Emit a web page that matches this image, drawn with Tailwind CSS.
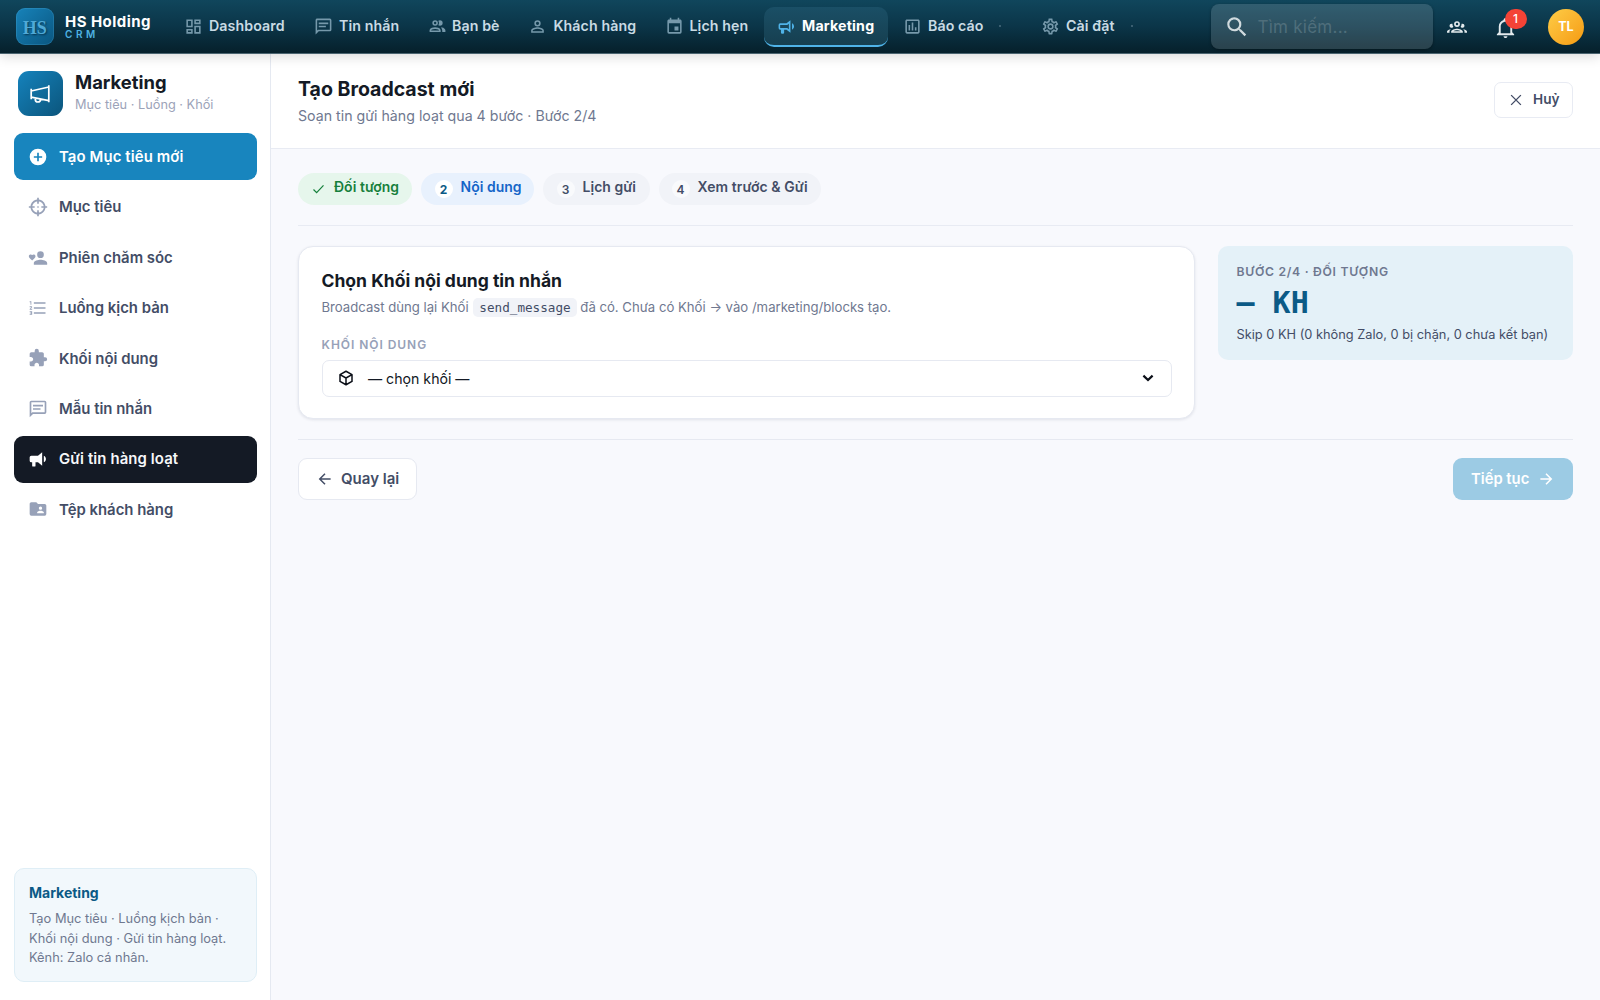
<!DOCTYPE html>
<html lang="vi">
<head>
<meta charset="utf-8">
<title>HS Holding CRM</title>
<script src="https://cdn.jsdelivr.net/npm/@tailwindcss/browser@4"></script>
</head>
<body class="flex h-[1000px] w-[1600px] flex-col overflow-hidden bg-[#f8f9fd] font-['Inter',sans-serif] text-[#141a25]">

<!-- Top bar -->
<header class="relative z-10 flex h-[54px] shrink-0 items-center border-b border-[#4a6470] bg-linear-to-b from-[#10465c] via-[#0b3548] to-[#06202b] shadow-[0_2px_12px_rgba(0,0,0,0.16)]">
  <div class="ml-4 grid size-[37.5px] shrink-0 place-items-center rounded-[9px] bg-linear-to-br from-[#1783ba] to-[#0a5680] pt-[2px] font-['Liberation_Serif',serif] text-[18px] leading-none font-bold text-[#4fa9d6] shadow-[inset_0_0_0_1px_rgba(90,180,225,0.22)] [text-shadow:1px_1px_2px_rgba(0,30,50,0.7)]">HS</div>
  <div class="ml-[11.5px] w-[105.5px] shrink-0">
    <div class="text-[15px] leading-[15px] font-bold tracking-[0.45px] whitespace-nowrap text-white">HS Holding</div>
    <div class="text-[10px] leading-[10px] font-semibold tracking-[3.6px] text-[#4fb3e3]">CRM</div>
  </div>
  <nav class="flex h-full items-center text-[14.2px] font-semibold tracking-[0.1px] whitespace-nowrap text-[#c9dbe4] [&_span]:-mt-px [&_svg]:size-[19px] [&_svg]:shrink-0 [&_svg]:fill-[#7699ab]">
    <a class="flex w-[130px] items-center gap-[6.5px] pl-[13px]"><svg viewBox="0 0 24 24"><path d="M19,5V7H15V5H19M9,5V11H5V5H9M19,13V19H15V13H19M9,17V19H5V17H9M21,3H13V9H21V3M11,3H3V13H11V3M21,11H13V21H21V11M11,15H3V21H11V15Z"/></svg><span>Dashboard</span></a>
    <a class="flex w-[114px] items-center gap-[6.5px] pl-[13px]"><svg viewBox="0 0 24 24"><path d="M20,2A2,2 0 0,1 22,4V16A2,2 0 0,1 20,18H6L2,22V4C2,2.89 2.9,2 4,2H20M4,4V17.17L5.17,16H20V4H4M6,7H18V9H6V7M6,11H15V13H6V11Z"/></svg><span>Tin nhắn</span></a>
    <a class="flex w-[100.5px] items-center gap-[5.5px] pl-[13px]"><svg viewBox="0 0 24 24"><path d="M13.07 10.41A5 5 0 0 0 13.07 4.59A3.39 3.39 0 0 1 15 4A3.5 3.5 0 0 1 15 11A3.39 3.39 0 0 1 13.07 10.41M5.5 7.5A3.5 3.5 0 1 1 9 11A3.5 3.5 0 0 1 5.5 7.5M7.5 7.5A1.5 1.5 0 1 0 9 6A1.5 1.5 0 0 0 7.5 7.5M16 17V19H2V17S2 13 9 13 16 17 16 17M14 17C13.86 16.22 12.67 15 9 15S4.07 16.31 4 17M15.95 13A5.32 5.32 0 0 1 18 17V19H22V17S22 13.37 15.94 13Z"/></svg><span>Bạn bè</span></a>
    <a class="flex w-[137px] items-center gap-[6.5px] pl-[13px]"><svg viewBox="0 0 24 24"><path d="M12,4A4,4 0 0,1 16,8A4,4 0 0,1 12,12A4,4 0 0,1 8,8A4,4 0 0,1 12,4M12,6A2,2 0 0,0 10,8A2,2 0 0,0 12,10A2,2 0 0,0 14,8A2,2 0 0,0 12,6M12,13C14.67,13 20,14.33 20,17V20H4V17C4,14.33 9.33,13 12,13M12,14.9C9.03,14.9 5.9,16.36 5.9,17V18.1H18.1V17C18.1,16.36 14.97,14.9 12,14.9Z"/></svg><span>Khách hàng</span></a>
    <a class="flex w-[112px] items-center gap-[5.5px] pl-[13px]"><svg viewBox="0 0 24 24"><path d="M19,19H5V8H19M16,1V3H8V1H6V3H5C3.89,3 3,3.89 3,5V19A2,2 0 0,0 5,21H19A2,2 0 0,0 21,19V5C21,3.89 20.1,3 19,3H18V1M17,12H12V17H17V12Z"/></svg><span>Lịch hẹn</span></a>
    <a class="flex h-[40px] w-[124px] items-center gap-[6px] rounded-[10px] border-b-2 border-[#4fb3e8] bg-linear-to-b from-[#1a4f66] to-[#163f50] pt-px pl-[13px] font-bold text-white [&_svg]:fill-[#4fb3e8]!"><svg viewBox="0 0 24 24"><path d="M12,8H4A2,2 0 0,0 2,10V14A2,2 0 0,0 4,16H5V20A1,1 0 0,0 6,21H8A1,1 0 0,0 9,20V16H12L17,20V4L12,8M15,15.6L13,14H4V10H13L15,8.4V15.6M21.5,12C21.5,13.71 20.54,15.26 19,16V8C20.53,8.75 21.5,10.3 21.5,12Z"/></svg><span class="tracking-[0.18px]">Marketing</span></a>
    <a class="flex w-[140.5px] items-center gap-[6.5px] pl-[14.5px]"><svg viewBox="0 0 24 24"><path d="M9 17H7V10H9V17M13 17H11V7H13V17M17 17H15V13H17V17M19 19H5V5H19V19.1M19 3H5C3.9 3 3 3.9 3 5V19C3 20.1 3.9 21 5 21H19C20.1 21 21 20.1 21 19V5C21 3.9 20.1 3 19 3Z"/></svg><span>Báo cáo</span><i class="ml-[9px] size-[2px] rounded-full bg-[#4b6d7e]"></i></a>
    <a class="flex w-[130px] items-center gap-[6.5px] pl-[12px]"><svg viewBox="0 0 24 24"><path d="M12,8A4,4 0 0,1 16,12A4,4 0 0,1 12,16A4,4 0 0,1 8,12A4,4 0 0,1 12,8M12,10A2,2 0 0,0 10,12A2,2 0 0,0 12,14A2,2 0 0,0 14,12A2,2 0 0,0 12,10M10,22C9.75,22 9.54,21.82 9.5,21.58L9.13,18.93C8.5,18.68 7.96,18.34 7.44,17.94L4.95,18.95C4.73,19.03 4.46,18.95 4.34,18.73L2.34,15.27C2.21,15.05 2.27,14.78 2.46,14.63L4.57,12.97L4.5,12L4.57,11L2.46,9.37C2.27,9.22 2.21,8.95 2.34,8.73L4.34,5.27C4.46,5.05 4.73,4.96 4.95,5.05L7.44,6.05C7.96,5.66 8.5,5.32 9.13,5.07L9.5,2.42C9.54,2.18 9.75,2 10,2H14C14.25,2 14.46,2.18 14.5,2.42L14.87,5.07C15.5,5.32 16.04,5.66 16.56,6.05L19.05,5.05C19.27,4.96 19.54,5.05 19.66,5.27L21.66,8.73C21.79,8.95 21.73,9.22 21.54,9.37L19.43,11L19.5,12L19.43,13L21.54,14.63C21.73,14.78 21.79,15.05 21.66,15.27L19.66,18.73C19.54,18.95 19.27,19.04 19.05,18.95L16.56,17.95C16.04,18.34 15.5,18.68 14.87,18.93L14.5,21.58C14.46,21.82 14.25,22 14,22H10M11.25,4L10.88,6.61C9.68,6.86 8.62,7.5 7.85,8.39L5.44,7.35L4.69,8.65L6.8,10.2C6.4,11.37 6.4,12.64 6.8,13.8L4.68,15.36L5.43,16.66L7.86,15.62C8.63,16.5 9.68,17.14 10.87,17.38L11.24,20H12.76L13.13,17.39C14.32,17.14 15.37,16.5 16.14,15.62L18.57,16.66L19.32,15.36L17.2,13.81C17.6,12.64 17.6,11.37 17.2,10.2L19.31,8.65L18.56,7.35L16.15,8.39C15.38,7.5 14.32,6.86 13.12,6.62L12.75,4H11.25Z"/></svg><span>Cài đặt</span><i class="ml-[9.5px] size-[2px] rounded-full bg-[#4b6d7e]"></i></a>
  </nav>
  <div class="ml-auto flex items-center pr-4">
    <div class="flex h-[44.5px] w-[222px] items-center gap-2 rounded-[8px] bg-white/14 pl-[13px] shadow-[0_1px_3px_rgba(0,0,0,0.35)]">
      <svg class="size-[26px] fill-[#d0dade]" viewBox="0 0 24 24"><path d="M9.5,3A6.5,6.5 0 0,1 16,9.5C16,11.11 15.41,12.59 14.44,13.73L14.71,14H15.5L20.5,19L19,20.5L14,15.5V14.71L13.73,14.44C12.59,15.41 11.11,16 9.5,16A6.5,6.5 0 0,1 3,9.5A6.5,6.5 0 0,1 9.5,3M9.5,5C7,5 5,7 5,9.5C5,12 7,14 9.5,14C12,14 14,12 14,9.5C14,7 12,5 9.5,5Z"/></svg>
      <span class="mt-[3px] text-[17px] tracking-[0.25px] text-[#4f6e7b]">Tìm kiếm...</span>
    </div>
    <svg class="ml-[14.5px] size-[20px] fill-[#e3eaed]" viewBox="0 0 24 24"><path d="M12,5A3.5,3.5 0 0,0 8.5,8.5A3.5,3.5 0 0,0 12,12A3.5,3.5 0 0,0 15.5,8.5A3.5,3.5 0 0,0 12,5M12,7A1.5,1.5 0 0,1 13.5,8.5A1.5,1.5 0 0,1 12,10A1.5,1.5 0 0,1 10.5,8.5A1.5,1.5 0 0,1 12,7M5.5,8A2.5,2.5 0 0,0 3,10.5C3,11.44 3.53,12.25 4.29,12.68C4.65,12.88 5.06,13 5.5,13C5.94,13 6.35,12.88 6.71,12.68C7.08,12.47 7.39,12.17 7.62,11.81C6.89,10.86 6.5,9.7 6.5,8.5C6.5,8.41 6.5,8.31 6.5,8.22C6.2,8.08 5.86,8 5.5,8M18.5,8C18.14,8 17.8,8.08 17.5,8.22C17.5,8.31 17.5,8.41 17.5,8.5C17.5,9.7 17.11,10.86 16.38,11.81C16.5,12 16.63,12.15 16.78,12.3C16.94,12.45 17.1,12.58 17.29,12.68C17.65,12.88 18.06,13 18.5,13C18.94,13 19.35,12.88 19.71,12.68C20.47,12.25 21,11.44 21,10.5A2.5,2.5 0 0,0 18.5,8M12,14C9.66,14 5,15.17 5,17.5V19H19V17.5C19,15.17 14.34,14 12,14M4.71,14.55C2.78,14.78 0,15.76 0,17.5V19H3V17.07C3,16.06 3.69,15.22 4.71,14.55M19.29,14.55C20.31,15.22 21,16.06 21,17.07V19H24V17.5C24,15.76 21.22,14.78 19.29,14.55M12,16C13.53,16 15.24,16.5 16.23,17H7.77C8.76,16.5 10.47,16 12,16Z"/></svg>
    <div class="relative ml-[27px] size-[23px]">
      <svg class="size-[23px] translate-y-px fill-[#e3eaed]" viewBox="0 0 24 24"><path d="M10 21H14C14 22.1 13.1 23 12 23S10 22.1 10 21M21 19V20H3V19L5 17V11C5 7.9 7.03 5.17 10 4.29C10 4.19 10 4.1 10 4C10 2.9 10.9 2 12 2S14 2.9 14 4C14 4.1 14 4.19 14 4.29C16.97 5.17 19 7.9 19 11V17L21 19M17 11C17 8.24 14.76 6 12 6S7 8.24 7 11V18H17V11Z"/></svg>
      <span class="absolute top-[-6px] left-[10.5px] grid h-5 w-[22px] place-items-center rounded-full bg-[#f44336] text-[12px] font-medium text-white">1</span>
    </div>
    <div class="ml-[31px] grid size-[36px] place-items-center rounded-full bg-linear-to-br from-[#fdcd45] to-[#f59a0b] pt-px text-[12.5px] font-bold text-white">TL</div>
  </div>
</header>

<div class="flex min-h-0 flex-1">
  <!-- Sidebar -->
  <aside class="flex w-[271px] shrink-0 flex-col border-r border-[#e5e9f1] bg-white px-[13.5px] pt-[17.3px] pb-[18px]">
    <div class="flex h-[62px] items-start gap-[12.5px] pl-[4.5px]">
      <div class="grid size-[44.5px] place-items-center rounded-[11px] bg-linear-to-br from-[#1583bd] to-[#0b557c]">
        <svg class="size-6" viewBox="0 0 24 24" fill="none" stroke="#fff" stroke-width="1.7" stroke-linejoin="round"><path d="M3.2 6.8V17.2M3.2 9L20.8 5V18.6L3.2 15.2M20.8 3.2V20.2M7.3 16V17.4A2.6 2.6 0 0 0 12.5 17.4V17"/></svg>
      </div>
      <div>
        <div class="text-[18.4px] leading-[22px] font-bold">Marketing</div>
        <div class="text-[12.75px] leading-[24px] text-[#9ca3b9]">Mục tiêu · Luồng · Khối</div>
      </div>
    </div>
    <nav class="flex flex-col gap-[3.5px] text-[14.9px] font-semibold text-[#434d66] [&_a]:flex [&_a]:h-[46.9px] [&_a]:items-center [&_a]:gap-[11.5px] [&_a]:rounded-[9px] [&_a]:pl-[14px] [&_span]:mt-px [&_svg]:size-5 [&_svg]:fill-[#97a1b8]">
      <a class="bg-[#1885be] text-white [&_svg]:fill-white!"><svg viewBox="0 0 24 24"><path d="M17,13H13V17H11V13H7V11H11V7H13V11H17M12,2A10,10 0 0,0 2,12A10,10 0 0,0 12,22A10,10 0 0,0 22,12A10,10 0 0,0 12,2Z"/></svg><span class="tracking-[0.12px]">Tạo Mục tiêu mới</span></a>
      <a><svg viewBox="0 0 24 24"><path d="M3.05,13H1V11H3.05C3.5,6.83 6.83,3.5 11,3.05V1H13V3.05C17.17,3.5 20.5,6.83 20.95,11H23V13H20.95C20.5,17.17 17.17,20.5 13,20.95V23H11V20.95C6.83,20.5 3.5,17.17 3.05,13M12,5A7,7 0 0,0 5,12A7,7 0 0,0 12,19A7,7 0 0,0 19,12A7,7 0 0,0 12,5M11 5H13V8H11ZM11 16H13V19H11ZM5 11H8V13H5ZM16 11H19V13H16ZM11.2 11.2H12.8V12.8H11.2Z"/></svg><span>Mục tiêu</span></a>
      <a><svg viewBox="0 0 24 24"><path d="M15,14C12.3,14 7,15.3 7,18V20H23V18C23,15.3 17.7,14 15,14M15,12A4,4 0 0,0 19,8A4,4 0 0,0 15,4A4,4 0 0,0 11,8A4,4 0 0,0 15,12M5,15L4.4,14.5C2.4,12.6 1,11.4 1,9.9C1,8.7 2,7.7 3.2,7.7C3.9,7.7 4.6,8 5,8.5C5.4,8 6.1,7.7 6.8,7.7C8,7.7 9,8.6 9,9.9C9,11.4 7.6,12.6 5.6,14.5L5,15Z"/></svg><span>Phiên chăm sóc</span></a>
      <a><svg viewBox="0 0 24 24"><path d="M7,13V11H21V13H7M7,19V17H21V19H7M7,7V5H21V7H7M3,8V5H2V4H4V8H3M2,17V16H5V20H2V19H4V18.5H3V17.5H4V17H2M4.25,10A0.75,0.75 0 0,1 5,10.75C5,10.95 4.92,11.14 4.79,11.27L3.12,13H5V14H2V13.08L4,11H2V10H4.25Z"/></svg><span>Luồng kịch bản</span></a>
      <a><svg viewBox="0 0 24 24"><path d="M20.5,11H19V7C19,5.89 18.1,5 17,5H13V3.5A2.5,2.5 0 0,0 10.5,1A2.5,2.5 0 0,0 8,3.5V5H4A2,2 0 0,0 2,7V10.8H3.5C5,10.8 6.2,12 6.2,13.5C6.2,15 5,16.2 3.5,16.2H2V20A2,2 0 0,0 4,22H7.8V20.5C7.8,19 9,17.8 10.5,17.8C12,17.8 13.2,19 13.2,20.5V22H17A2,2 0 0,0 19,20V16H20.5A2.5,2.5 0 0,0 23,13.5A2.5,2.5 0 0,0 20.5,11Z"/></svg><span>Khối nội dung</span></a>
      <a><svg viewBox="0 0 24 24"><path d="M20,2A2,2 0 0,1 22,4V16A2,2 0 0,1 20,18H6L2,22V4C2,2.89 2.9,2 4,2H20M4,4V17.17L5.17,16H20V4H4M6,7H18V9H6V7M6,11H15V13H6V11Z"/></svg><span>Mẫu tin nhắn</span></a>
      <a class="bg-[#141a25] text-[#f6f7f9] [&_svg]:fill-white!"><svg viewBox="0 0 24 24"><path d="M12,8H4A2,2 0 0,0 2,10V14A2,2 0 0,0 4,16H5V20A1,1 0 0,0 6,21H8A1,1 0 0,0 9,20V16H12L17,20V4L12,8M21.5,12C21.5,13.71 20.54,15.26 19,16V8C20.53,8.75 21.5,10.3 21.5,12Z"/></svg><span class="tracking-[0.12px]">Gửi tin hàng loạt</span></a>
      <a><svg viewBox="0 0 24 24"><path d="M19,17H11V16C11,14.67 13.67,14 15,14C16.33,14 19,14.67 19,16M15,9A2,2 0 0,1 17,11A2,2 0 0,1 15,13A2,2 0 0,1 13,11C13,9.89 13.9,9 15,9M20,6H12L10,4H4C2.89,4 2,4.89 2,6V18A2,2 0 0,0 4,20H20A2,2 0 0,0 22,18V8C22,6.89 21.1,6 20,6Z"/></svg><span>Tệp khách hàng</span></a>
    </nav>
    <div class="mt-auto h-[114px] rounded-[10px] border border-[#dfeef6] bg-[#f2f8fc] px-[14.5px] pt-[13px]">
      <div class="text-[14px] leading-[22px] font-bold text-[#0b5a86]">Marketing</div>
      <p class="mt-[5px] text-[12.85px] leading-[19.6px] whitespace-nowrap text-[#6f7890]">Tạo Mục tiêu · Luồng kịch bản ·<br>Khối nội dung · Gửi tin hàng loạt.<br>Kênh: Zalo cá nhân.</p>
    </div>
  </aside>

  <!-- Main column -->
  <main class="flex min-w-0 flex-1 flex-col">
    <div class="flex h-[95px] shrink-0 items-start justify-between border-b border-[#e8ebf3] bg-white pr-[27px] pl-[27px]">
      <div class="pt-[21px]">
        <h1 class="text-[19.52px] leading-7 font-bold">Tạo Broadcast mới</h1>
        <p class="mt-[2px] text-[14.2px] leading-[21px] text-[#6f7890]">Soạn tin gửi hàng loạt qua 4 bước · Bước 2/4</p>
      </div>
      <button class="mt-[28px] flex h-[36px] w-[79px] items-center rounded-[7px] border border-[#e8ebf3] bg-white pb-px pl-[12px] text-[13.6px] font-semibold text-[#434d66]">
        <svg class="mt-px mr-[8px] size-[18px]" viewBox="0 0 24 24" fill="none" stroke="#434d66" stroke-width="1.8"><path d="M5.5 5.5L18.5 18.5M18.5 5.5L5.5 18.5"/></svg>Huỷ
      </button>
    </div>

    <div class="flex flex-col px-[27px] pt-[24px]">
      <div class="flex h-[52.5px] items-start gap-[9px] border-b border-[#e8ebf3] text-[13.95px] font-semibold tracking-[0.05px] whitespace-nowrap text-[#434d66]">
        <div class="flex h-[32px] w-[114px] items-center rounded-full bg-[#e6f6ec] pl-[13px] text-[#16803c]"><svg class="mr-[8px] size-[15px]" viewBox="0 0 24 24" fill="none" stroke="#16803c" stroke-width="2"><path d="M4 12L9 17L20 5.5"/></svg><span class="-mt-[3px]">Đối tượng</span></div>
        <div class="flex h-[32px] w-[113px] items-center rounded-full bg-[#e8f1fd] pl-[13.5px] text-[#1565c8]"><span class="mr-[8px] grid size-[18px] place-items-center rounded-full bg-white pt-px text-[12px] font-bold text-[#0b5a86]">2</span><span class="-mt-[3px]">Nội dung</span></div>
        <div class="flex h-[32px] w-[106.5px] items-center rounded-full bg-[#f1f3f8] pl-[13.5px]"><span class="mr-[8px] grid size-[18px] place-items-center rounded-full bg-[#f9fafc] pt-px text-[12px]">3</span><span class="-mt-[3px]">Lịch gửi</span></div>
        <div class="flex h-[32px] w-[162.5px] items-center rounded-full bg-[#f1f3f8] pl-[13px]"><span class="mr-[8px] grid size-[18px] place-items-center rounded-full bg-[#f9fafc] pt-px text-[12px]">4</span><span class="-mt-[3px] tracking-[0.1px]">Xem trước &amp; Gửi</span></div>
      </div>

      <div class="mt-[20px] flex items-start gap-[22.5px]">
        <section class="h-[173px] w-[897px] rounded-[15px] border border-[#e6e9f1] bg-white px-[22.5px] pt-[22px] shadow-[0_1px_3px_rgba(20,30,60,0.1)]">
          <h2 class="text-[17.52px] leading-6 font-bold">Chọn Khối nội dung tin nhắn</h2>
          <p class="mt-[4px] text-[13.15px] leading-5 whitespace-nowrap text-[#6f7890]">Broadcast dùng lại Khối <code class="ml-px rounded-[5px] bg-[#f1f3f8] px-[6px] py-[2px] font-['DejaVu_Sans_Mono',monospace] text-[12.65px] text-[#434d66]">send_message</code> đã có. Chưa có Khối → vào /marketing/blocks tạo.</p>
          <div class="mt-[19px] text-[12px] leading-[15px] font-semibold tracking-[0.95px] text-[#97a1b8]">KHỐI NỘI DUNG</div>
          <div class="mt-[8px] flex h-[37.5px] items-center rounded-[7px] border border-[#e6e9f1] pr-[17px] pl-[14px]">
            <svg class="size-[18px]" viewBox="0 0 24 24" fill="none" stroke="#0b0f18" stroke-width="2" stroke-linejoin="round"><path d="M12 3L20 7.5V16.5L12 21L4 16.5V7.5ZM4 7.5L12 12L20 7.5M12 12V21"/></svg>
            <span class="ml-[13.5px] text-[14.15px] whitespace-nowrap">— chọn khối —</span>
            <svg class="ml-auto h-[8px] w-[12px]" viewBox="0 0 12 8" fill="none" stroke="#0b0f18" stroke-width="2.2"><path d="M1.4 1.6L6 6L10.6 1.6"/></svg>
          </div>
        </section>
        <aside class="h-[114px] flex-1 rounded-[10px] bg-[#e4f1f8] pt-[17px] pl-[19px]">
          <div class="text-[12.2px] leading-[18px] font-semibold tracking-[0.7px] text-[#6f7890]">BƯỚC 2/4 · ĐỐI TƯỢNG</div>
          <div class="mt-[5.5px] font-['DejaVu_Sans_Mono',monospace] text-[30px] leading-[34px] font-bold whitespace-pre text-[#0b5a86]">– KH</div>
          <div class="mt-[5px] text-[12.81px] leading-5 whitespace-nowrap text-[#434d66]">Skip 0 KH (0 không Zalo, 0 bị chặn, 0 chưa kết bạn)</div>
        </aside>
      </div>

      <div class="mt-[20px] flex items-start justify-between border-t border-[#e6e9f1] pt-[18px] text-[15px] font-semibold">
        <button class="flex h-[42px] w-[119px] items-center rounded-[9px] border border-[#e6e9f1] bg-white pl-[17px] text-[#434d66]">
          <svg class="mr-[7px] size-[18px]" viewBox="0 0 24 24" fill="none" stroke="#434d66" stroke-width="2"><path d="M19.5 12H5.5M12 5L5 12L12 19"/></svg><span class="mt-px">Quay lại</span>
        </button>
        <button class="flex h-[42px] w-[120px] items-center rounded-[9px] bg-[#9ccbe4] pl-[18px] text-[14.8px] text-white"><span class="mt-px">Tiếp tục</span>
          <svg class="ml-[7.5px] size-[18px]" viewBox="0 0 24 24" fill="none" stroke="#fff" stroke-width="2"><path d="M4.5 12H18.5M12 5L19 12L12 19"/></svg>
        </button>
      </div>
    </div>
  </main>
</div>
</body>
</html>
